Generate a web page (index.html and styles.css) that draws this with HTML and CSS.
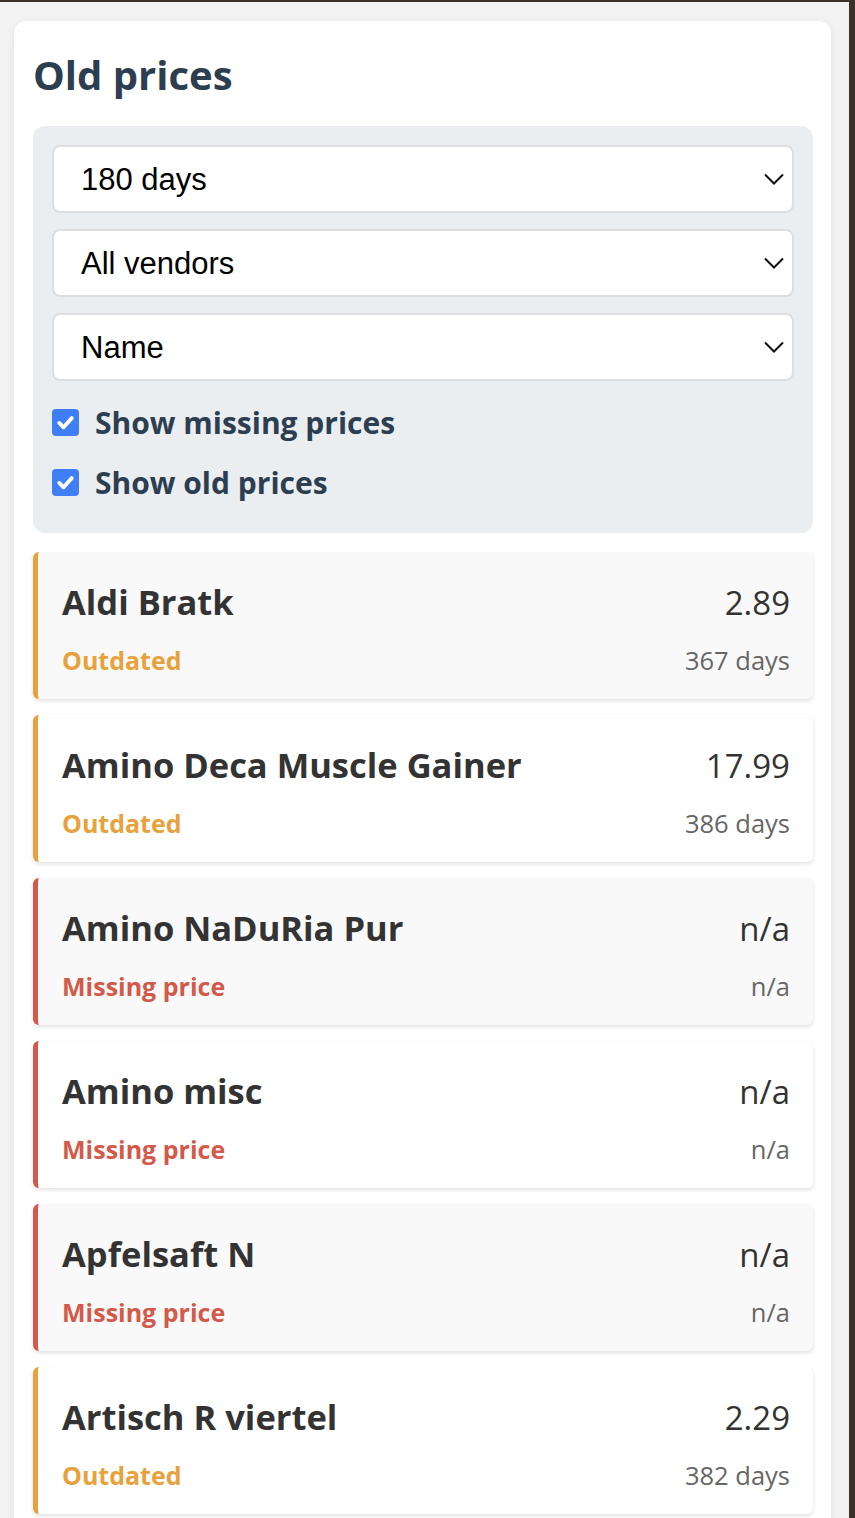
FILE: index.html
```html
<!DOCTYPE html>
<html lang="en">
<head>
<meta charset="utf-8">
<title>Old prices</title>
<link rel="stylesheet" href="styles.css">
</head>
<body>
<div class="frame">
  <main class="panel">
    <h1 class="title">Old prices</h1>
    <section class="filters">
      <select class="select"><option>180 days</option></select>
      <select class="select"><option>All vendors</option></select>
      <select class="select"><option>Name</option></select>
      <label class="check first">
        <span class="box"><svg viewBox="0 0 28 28" width="28" height="28"><path d="M7.5 14.5 L12 19 L20.5 9.5" fill="none" stroke="#fff" stroke-width="4" stroke-linecap="round" stroke-linejoin="round"/></svg></span>
        <span>Show missing prices</span>
      </label>
      <label class="check">
        <span class="box"><svg viewBox="0 0 28 28" width="28" height="28"><path d="M7.5 14.5 L12 19 L20.5 9.5" fill="none" stroke="#fff" stroke-width="4" stroke-linecap="round" stroke-linejoin="round"/></svg></span>
        <span>Show old prices</span>
      </label>
    </section>
    <ul class="items">
      <li class="item outdated">
        <div class="row"><span class="name">Aldi Bratk</span><span class="price">2.89</span></div>
        <div class="row"><span class="status">Outdated</span><span class="age">367 days</span></div>
      </li>
      <li class="item outdated">
        <div class="row"><span class="name">Amino Deca Muscle Gainer</span><span class="price">17.99</span></div>
        <div class="row"><span class="status">Outdated</span><span class="age">386 days</span></div>
      </li>
      <li class="item missing">
        <div class="row"><span class="name">Amino NaDuRia Pur</span><span class="price">n/a</span></div>
        <div class="row"><span class="status">Missing price</span><span class="age">n/a</span></div>
      </li>
      <li class="item missing">
        <div class="row"><span class="name">Amino misc</span><span class="price">n/a</span></div>
        <div class="row"><span class="status">Missing price</span><span class="age">n/a</span></div>
      </li>
      <li class="item missing">
        <div class="row"><span class="name">Apfelsaft N</span><span class="price">n/a</span></div>
        <div class="row"><span class="status">Missing price</span><span class="age">n/a</span></div>
      </li>
      <li class="item outdated">
        <div class="row"><span class="name">Artisch R viertel</span><span class="price">2.29</span></div>
        <div class="row"><span class="status">Outdated</span><span class="age">382 days</span></div>
      </li>
    </ul>
  </main>
</div>
</body>
</html>
```
FILE: styles.css
```css
html, body {
  margin: 0;
  padding: 0;
  background: #3d3026;
  height: 100%;
  overflow: hidden;
}
body {
  font-family: "Open Sans", "Noto Sans", sans-serif;
}
.frame {
  margin-top: 2px;
  margin-right: 6px;
  background: #f3f3f3;
  padding: 19px 18px 0 14px;
  min-height: 1600px;
}
.panel {
  background: #fff;
  border-radius: 12px;
  box-shadow: 0 2px 10px rgba(0, 0, 0, 0.08);
  padding: 31px 18px 19px 19px;
}
.title {
  margin: 0 0 28px 0;
  font-size: 40px;
  line-height: 46px;
  font-weight: 700;
  color: #2c3e50;
}
.filters {
  background: #ebeef0;
  border-radius: 12px;
  padding: 19px 19px 31px 19px;
  display: flex;
  flex-direction: column;
  gap: 16px;
}
.select {
  appearance: none;
  -webkit-appearance: none;
  height: 68px;
  width: 100%;
  border: 2px solid #dcdee0;
  border-radius: 8px;
  background-color: #fff;
  background-image: url("data:image/svg+xml,%3Csvg xmlns='http://www.w3.org/2000/svg' width='20' height='12' viewBox='0 0 20 12'%3E%3Cpath d='M1 1.5 L10 10.5 L19 1.5' fill='none' stroke='%23111' stroke-width='2'/%3E%3C/svg%3E");
  background-repeat: no-repeat;
  background-position: right 8px center;
  padding: 0 27px;
  font-family: "Liberation Sans", Arial, sans-serif;
  font-size: 31px;
  color: #000;
  margin: 0;
}
.check {
  display: flex;
  align-items: center;
  gap: 16px;
  height: 40px;
  font-size: 30px;
  font-weight: 700;
  color: #2c3e50;
  margin-top: 4px;
}
.check.first {
  margin-top: 5px;
}
.box {
  width: 27px;
  height: 27px;
  border-radius: 4px;
  background: #3f7ef6;
  display: flex;
  align-items: center;
  justify-content: center;
  flex: none;
}
.box svg {
  width: 27px;
  height: 27px;
}
.items {
  list-style: none;
  margin: 19px 0 0 0;
  padding: 0;
  display: flex;
  flex-direction: column;
  gap: 16px;
}
.item {
  height: 147px;
  box-sizing: border-box;
  padding: 30px 23px 23px 24px;
  border-left: 5px solid #e8a23d;
  border-radius: 6px;
  background: #fff;
  box-shadow: 0 2px 4px rgba(0, 0, 0, 0.12);
  display: flex;
  flex-direction: column;
  gap: 22px;
}
.item:nth-child(odd) {
  background: #f9f9f9;
}
.item.missing {
  border-left-color: #d3594a;
}
.row {
  display: flex;
  justify-content: space-between;
  align-items: baseline;
}
.row:first-child {
  height: 40px;
  line-height: 40px;
}
.row:last-child {
  height: 32px;
  line-height: 32px;
}
.name {
  font-size: 34.5px;
  font-weight: 700;
  color: #333;
}
.price {
  font-size: 33px;
  color: #333;
}
.status {
  font-size: 25px;
  font-weight: 700;
}
.outdated .status { color: #e8a23d; }
.missing .status { color: #d3594a; }
.age {
  font-size: 25.5px;
  color: #666;
}
```
